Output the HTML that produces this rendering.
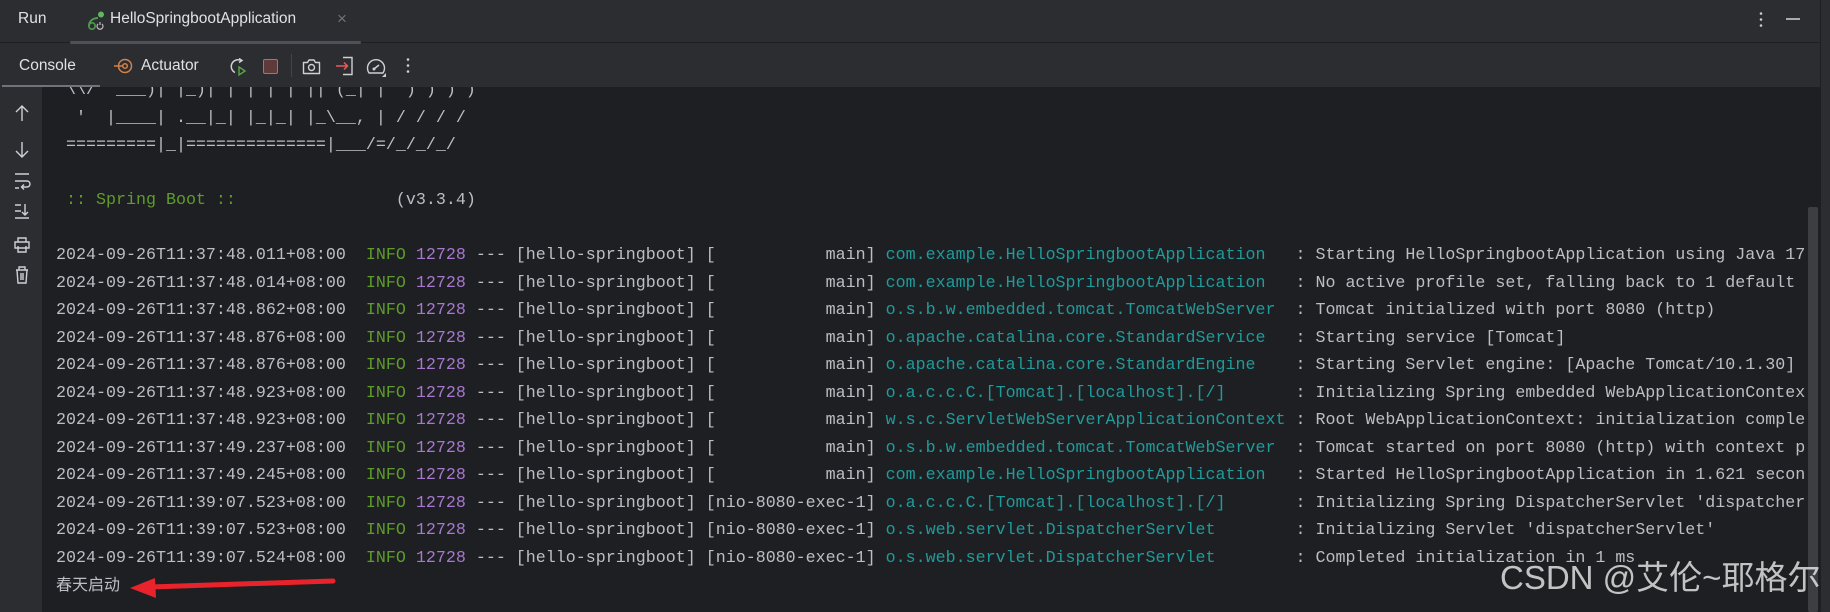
<!DOCTYPE html>
<html><head><meta charset="utf-8"><style>
*{margin:0;padding:0;box-sizing:border-box}
html,body{width:1830px;height:612px;overflow:hidden;background:#1e1f22;font-family:"Liberation Sans",sans-serif}
.tabs{position:absolute;left:0;top:0;width:1820px;height:43px;background:#2b2d30;border-bottom:1px solid #1e1f22}
.tool{position:absolute;left:0;top:43px;width:1820px;height:44px;background:#2b2d30}
.edge{position:absolute;left:1820px;top:0;width:10px;height:612px;background:#2b2d30;border-left:1px solid #1e1f22}
.gut{position:absolute;left:0;top:87px;width:42px;height:525px;background:#2b2d30}
.t{position:absolute;color:#dfe1e5;font-size:15px;white-space:nowrap}
.con{position:absolute;left:42px;top:87px;width:1764px;height:525px;overflow:hidden}
pre{position:absolute;left:14px;top:-10px;font-family:"Liberation Mono","Noto Sans CJK SC",monospace;font-size:16.67px;line-height:27.5px;color:#bcbec4;white-space:pre}
.g{color:#5e9c2b}.p{color:#a877d0}.c{color:#1f9b9b}
.cn{font-family:"Liberation Sans","Noto Sans CJK SC",sans-serif;font-size:16px}
svg{position:absolute;overflow:visible}
</style></head><body>
<div class="tabs"></div>
<div class="tool"></div>
<div class="edge"></div>
<div class="gut"></div>
<div class="t" style="left:18px;top:10px;font-size:15.5px">Run</div>
<svg style="left:87px;top:11px" width="20" height="20" viewBox="0 0 20 20"><path d="M2 15c0-5 4-8 9-8" stroke="#4e9a4e" stroke-width="2" fill="none"/><circle cx="14" cy="3.5" r="3" fill="#5fb85f"/><circle cx="5" cy="15" r="3.2" fill="none" stroke="#4e9a4e" stroke-width="1.6"/><path d="M13 11v3M11 13a3 3 0 1 0 4 0" stroke="#bbb" stroke-width="1.2" fill="none"/></svg>
<div class="t" style="left:110px;top:10px;font-size:15.5px">HelloSpringbootApplication</div>
<div class="t" style="left:337px;top:9px;color:#6f737a;font-size:17px">×</div>
<div style="position:absolute;left:70px;top:41px;width:291px;height:3px;border-radius:2px;background:#4e5157"></div>
<svg style="left:1759px;top:12px" width="4" height="16"><circle cx="2" cy="1.5" r="1.3" fill="#ccc"/><circle cx="2" cy="7.5" r="1.3" fill="#ccc"/><circle cx="2" cy="13.5" r="1.3" fill="#ccc"/></svg>
<div style="position:absolute;left:1786px;top:18px;width:14px;height:2px;background:#aaa"></div>

<div class="t" style="left:19px;top:57px;font-size:15.5px">Console</div>
<div style="position:absolute;left:2px;top:85px;width:98px;height:2px;background:#6f737a"></div>
<svg style="left:114px;top:57px" width="20" height="18" viewBox="0 0 20 18"><circle cx="11" cy="9" r="6.5" stroke="#d2814a" stroke-width="1.5" fill="none"/><circle cx="11" cy="9" r="2.3" stroke="#d2814a" stroke-width="1.5" fill="none"/><path d="M0 9h8" stroke="#d2814a" stroke-width="1.5"/></svg>
<div class="t" style="left:141px;top:57px;font-size:15.5px">Actuator</div>
<svg style="left:228px;top:57px" width="20" height="20" viewBox="0 0 20 20"><path d="M13 3.5A6.5 6.5 0 1 0 7 15.5" stroke="#ced0d6" stroke-width="1.5" fill="none"/><path d="M11 1.5l3 2-3 2" stroke="#ced0d6" stroke-width="1.5" fill="none"/><path d="M11 10l6 4-6 4z" stroke="#57a64a" stroke-width="1.4" fill="none"/></svg>
<div style="position:absolute;left:263px;top:59px;width:15px;height:15px;border-radius:2px;background:#5e3a3b;border:1.5px solid #db5c5c"></div>
<div style="position:absolute;left:291px;top:54px;width:1px;height:23px;background:#43454a"></div>
<svg style="left:302px;top:58px" width="19" height="17" viewBox="0 0 19 17"><path d="M1.5 4.5h4l1.5-2.5h5l1.5 2.5h4v11h-16z" stroke="#ced0d6" stroke-width="1.4" fill="none" stroke-linejoin="round"/><circle cx="9.5" cy="9.5" r="3" stroke="#ced0d6" stroke-width="1.4" fill="none"/></svg>
<svg style="left:336px;top:56px" width="18" height="20" viewBox="0 0 18 20"><path d="M7 1.5h9v17H7" stroke="#ced0d6" stroke-width="1.4" fill="none"/><path d="M0 10h11M8 6.5l3.5 3.5L8 13.5" stroke="#e55b5b" stroke-width="1.5" fill="none"/></svg>
<svg style="left:366px;top:57px" width="21" height="20" viewBox="0 0 21 20"><path d="M3 16A8.5 8.5 0 1 1 17 16z" stroke="#ced0d6" stroke-width="1.4" fill="none" stroke-linejoin="round"/><path d="M8 12l5-4" stroke="#ced0d6" stroke-width="1.5"/><circle cx="8" cy="12" r="1.5" fill="#ced0d6"/><path d="M20 16v4h-4z" fill="#ced0d6"/></svg>
<svg style="left:406px;top:58px" width="4" height="16"><circle cx="2" cy="1.5" r="1.3" fill="#ced0d6"/><circle cx="2" cy="7.5" r="1.3" fill="#ced0d6"/><circle cx="2" cy="13.5" r="1.3" fill="#ced0d6"/></svg>

<svg style="left:14px;top:104px" width="16" height="190" viewBox="0 0 16 190" fill="none" stroke="#ced0d6" stroke-width="1.4">
<path d="M8 2v15M2 8l6-6 6 6"/>
<path d="M8 38v15M2 47l6 6 6-6"/>
<path d="M1 70h14M1 77h12a2.5 2.5 0 0 1 0 6H8M10 80.5l-2.5 2.5 2.5 2.5M1 84h4"/>
<path d="M1 101h6M1 107h6M1 114h14M11 100v11M8 108l3 3 3-3"/>
<path d="M4 138v-4h8v4M1 138h14v6H1zM4 142v6h8v-6"/>
<path d="M2 166h12M5 166v-3h6v3M3 166l1 13h8l1-13M7 169v7M9 169v7"/>
</svg>

<div class="con"><pre>
 \\/  ___)| |_)| | | | | || (_| |  ) ) ) )
  '  |____| .__|_| |_|_| |_\__, | / / / /
 =========|_|==============|___/=/_/_/_/

<span class="g"> :: Spring Boot :: </span>               (v3.3.4)

2024-09-26T11:37:48.011+08:00  <span class="g">INFO</span> <span class="p">12728</span> --- [hello-springboot] [           main] <span class="c">com.example.HelloSpringbootApplication  </span> : Starting HelloSpringbootApplication using Java 17 with PID 12728
2024-09-26T11:37:48.014+08:00  <span class="g">INFO</span> <span class="p">12728</span> --- [hello-springboot] [           main] <span class="c">com.example.HelloSpringbootApplication  </span> : No active profile set, falling back to 1 default profile
2024-09-26T11:37:48.862+08:00  <span class="g">INFO</span> <span class="p">12728</span> --- [hello-springboot] [           main] <span class="c">o.s.b.w.embedded.tomcat.TomcatWebServer </span> : Tomcat initialized with port 8080 (http)
2024-09-26T11:37:48.876+08:00  <span class="g">INFO</span> <span class="p">12728</span> --- [hello-springboot] [           main] <span class="c">o.apache.catalina.core.StandardService  </span> : Starting service [Tomcat]
2024-09-26T11:37:48.876+08:00  <span class="g">INFO</span> <span class="p">12728</span> --- [hello-springboot] [           main] <span class="c">o.apache.catalina.core.StandardEngine   </span> : Starting Servlet engine: [Apache Tomcat/10.1.30]
2024-09-26T11:37:48.923+08:00  <span class="g">INFO</span> <span class="p">12728</span> --- [hello-springboot] [           main] <span class="c">o.a.c.c.C.[Tomcat].[localhost].[/]      </span> : Initializing Spring embedded WebApplicationContext
2024-09-26T11:37:48.923+08:00  <span class="g">INFO</span> <span class="p">12728</span> --- [hello-springboot] [           main] <span class="c">w.s.c.ServletWebServerApplicationContext</span> : Root WebApplicationContext: initialization completed
2024-09-26T11:37:49.237+08:00  <span class="g">INFO</span> <span class="p">12728</span> --- [hello-springboot] [           main] <span class="c">o.s.b.w.embedded.tomcat.TomcatWebServer </span> : Tomcat started on port 8080 (http) with context path
2024-09-26T11:37:49.245+08:00  <span class="g">INFO</span> <span class="p">12728</span> --- [hello-springboot] [           main] <span class="c">com.example.HelloSpringbootApplication  </span> : Started HelloSpringbootApplication in 1.621 seconds
2024-09-26T11:39:07.523+08:00  <span class="g">INFO</span> <span class="p">12728</span> --- [hello-springboot] [nio-8080-exec-1] <span class="c">o.a.c.c.C.[Tomcat].[localhost].[/]      </span> : Initializing Spring DispatcherServlet 'dispatcherServlet'
2024-09-26T11:39:07.523+08:00  <span class="g">INFO</span> <span class="p">12728</span> --- [hello-springboot] [nio-8080-exec-1] <span class="c">o.s.web.servlet.DispatcherServlet       </span> : Initializing Servlet 'dispatcherServlet'
2024-09-26T11:39:07.524+08:00  <span class="g">INFO</span> <span class="p">12728</span> --- [hello-springboot] [nio-8080-exec-1] <span class="c">o.s.web.servlet.DispatcherServlet       </span> : Completed initialization in 1 ms
<span class="cn">春天启动</span></pre></div>
<div style="position:absolute;left:1808px;top:207px;width:10px;height:405px;background:#3c3e42;border-radius:2px"></div>
<svg style="left:0;top:0" width="1830" height="612"><path d="M333 581L150 587" stroke="#e8232b" stroke-width="5" stroke-linecap="round"/><path d="M130 588L155 578L156 598z" fill="#e8232b"/></svg>
<div style="position:absolute;left:1500px;top:558px;font-family:'Liberation Sans','Noto Sans CJK SC',sans-serif;font-size:33px;color:rgba(225,225,225,0.85);white-space:nowrap;line-height:40px">CSDN @艾伦~耶格尔</div>
</body></html>
